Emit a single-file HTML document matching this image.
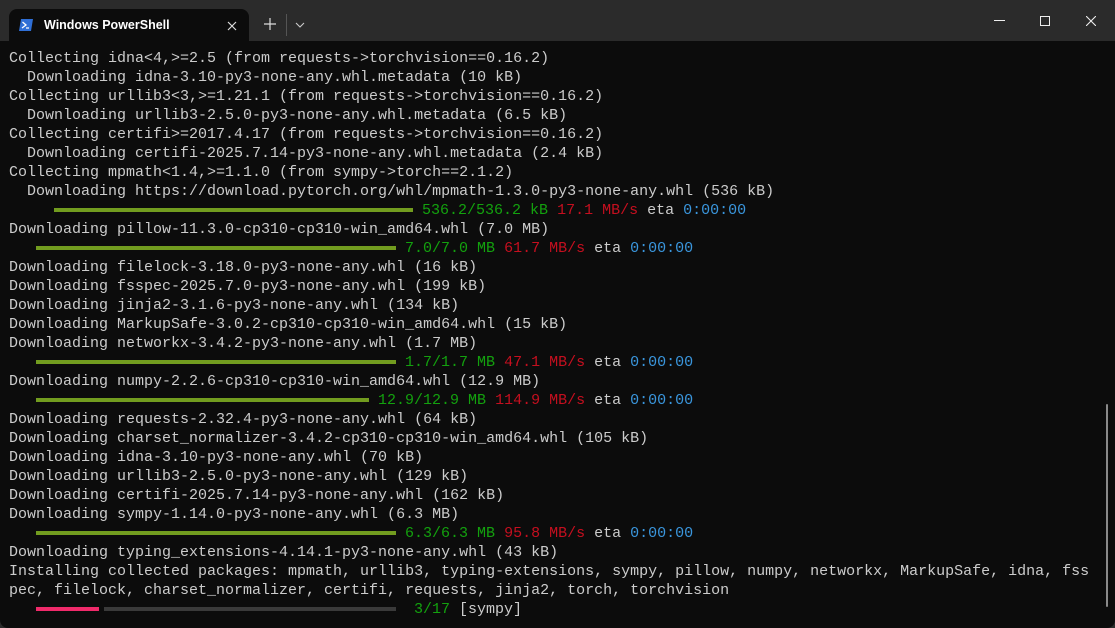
<!DOCTYPE html>
<html><head><meta charset="utf-8"><style>
*{margin:0;padding:0;box-sizing:border-box}
html,body{width:1115px;height:628px;overflow:hidden}
body{background:#2b2b2b;font-family:"Liberation Sans",sans-serif;position:relative}
.tab{position:absolute;left:9px;top:9px;width:240px;height:32px;background:#0c0c0c;border-radius:8px 8px 0 0}
.tab .t{position:absolute;left:35px;top:9px;color:#fff;font-size:12.5px;font-weight:bold}
.term{position:absolute;left:0;top:41px;width:1115px;height:587px;background:#0c0c0c;border-radius:0 0 8px 8px;overflow:hidden}
pre{position:absolute;left:9px;top:8px;font-family:"Liberation Mono",monospace;font-size:15px;line-height:19px;color:#cccccc;white-space:pre}
.g{color:#13a10e}.r{color:#c50f1f}.b{color:#3a96dd}
.bar{display:inline-block;height:4px;background:#729c1f;vertical-align:middle;margin-top:0px}
.sb{position:absolute;left:1106px;top:363px;width:2px;height:203px;background:#8a8a8a;border-radius:1px}
</style></head><body>
<div class="tab">
<svg style="position:absolute;left:10px;top:10px" width="14" height="12" viewBox="0 0 14 12"><path d="M2 0H14L12 12H0Z" fill="#2f6fd6"/><path d="M3.5 3L7 6L3 9" stroke="#fff" stroke-width="1.3" fill="none"/><path d="M7 9H10" stroke="#fff" stroke-width="1.2"/></svg>
<span class="t">Windows PowerShell</span>
<svg style="position:absolute;left:218px;top:12px" width="10" height="10"><path d="M1 1L9 9M9 1L1 9" stroke="#ddd" stroke-width="1.2"/></svg>
</div>
<svg style="position:absolute;left:264px;top:18px" width="12" height="12"><path d="M6 0V12M0 6H12" stroke="#ddd" stroke-width="1.2"/></svg>
<div style="position:absolute;left:286px;top:14px;width:1px;height:22px;background:#555"></div>
<svg style="position:absolute;left:295px;top:22px" width="10" height="6"><path d="M1 1L5 5L9 1" stroke="#ccc" stroke-width="1.1" fill="none"/></svg>
<div style="position:absolute;left:994px;top:20px;width:11px;height:1px;background:#eee"></div>
<div style="position:absolute;left:1040px;top:16px;width:10px;height:10px;border:1px solid #eee"></div>
<svg style="position:absolute;left:1086px;top:16px" width="10" height="10"><path d="M0 0L10 10M10 0L0 10" stroke="#eee" stroke-width="1.1"/></svg>
<div class="term">
<pre>Collecting idna&lt;4,&gt;=2.5 (from requests-&gt;torchvision==0.16.2)
  Downloading idna-3.10-py3-none-any.whl.metadata (10 kB)
Collecting urllib3&lt;3,&gt;=1.21.1 (from requests-&gt;torchvision==0.16.2)
  Downloading urllib3-2.5.0-py3-none-any.whl.metadata (6.5 kB)
Collecting certifi&gt;=2017.4.17 (from requests-&gt;torchvision==0.16.2)
  Downloading certifi-2025.7.14-py3-none-any.whl.metadata (2.4 kB)
Collecting mpmath&lt;1.4,&gt;=1.1.0 (from sympy-&gt;torch==2.1.2)
  Downloading https://download.pytorch.org/whl/mpmath-1.3.0-py3-none-any.whl (536 kB)
     <span class="bar" style="width:359px"></span> <span class="g">536.2/536.2 kB</span> <span class="r">17.1 MB/s</span> eta <span class="b">0:00:00</span>
Downloading pillow-11.3.0-cp310-cp310-win_amd64.whl (7.0 MB)
   <span class="bar" style="width:360px"></span> <span class="g">7.0/7.0 MB</span> <span class="r">61.7 MB/s</span> eta <span class="b">0:00:00</span>
Downloading filelock-3.18.0-py3-none-any.whl (16 kB)
Downloading fsspec-2025.7.0-py3-none-any.whl (199 kB)
Downloading jinja2-3.1.6-py3-none-any.whl (134 kB)
Downloading MarkupSafe-3.0.2-cp310-cp310-win_amd64.whl (15 kB)
Downloading networkx-3.4.2-py3-none-any.whl (1.7 MB)
   <span class="bar" style="width:360px"></span> <span class="g">1.7/1.7 MB</span> <span class="r">47.1 MB/s</span> eta <span class="b">0:00:00</span>
Downloading numpy-2.2.6-cp310-cp310-win_amd64.whl (12.9 MB)
   <span class="bar" style="width:333px"></span> <span class="g">12.9/12.9 MB</span> <span class="r">114.9 MB/s</span> eta <span class="b">0:00:00</span>
Downloading requests-2.32.4-py3-none-any.whl (64 kB)
Downloading charset_normalizer-3.4.2-cp310-cp310-win_amd64.whl (105 kB)
Downloading idna-3.10-py3-none-any.whl (70 kB)
Downloading urllib3-2.5.0-py3-none-any.whl (129 kB)
Downloading certifi-2025.7.14-py3-none-any.whl (162 kB)
Downloading sympy-1.14.0-py3-none-any.whl (6.3 MB)
   <span class="bar" style="width:360px"></span> <span class="g">6.3/6.3 MB</span> <span class="r">95.8 MB/s</span> eta <span class="b">0:00:00</span>
Downloading typing_extensions-4.14.1-py3-none-any.whl (43 kB)
Installing collected packages: mpmath, urllib3, typing-extensions, sympy, pillow, numpy, networkx, MarkupSafe, idna, fss
pec, filelock, charset_normalizer, certifi, requests, jinja2, torch, torchvision
   <span class="bar" style="width:63px;background:#f02a6a"></span><span class="bar" style="width:292px;margin-left:5px;background:#3a3a3a"></span>  <span class="g">3/17</span> [sympy]</pre>
<div class="sb"></div>
</div>
</body></html>
